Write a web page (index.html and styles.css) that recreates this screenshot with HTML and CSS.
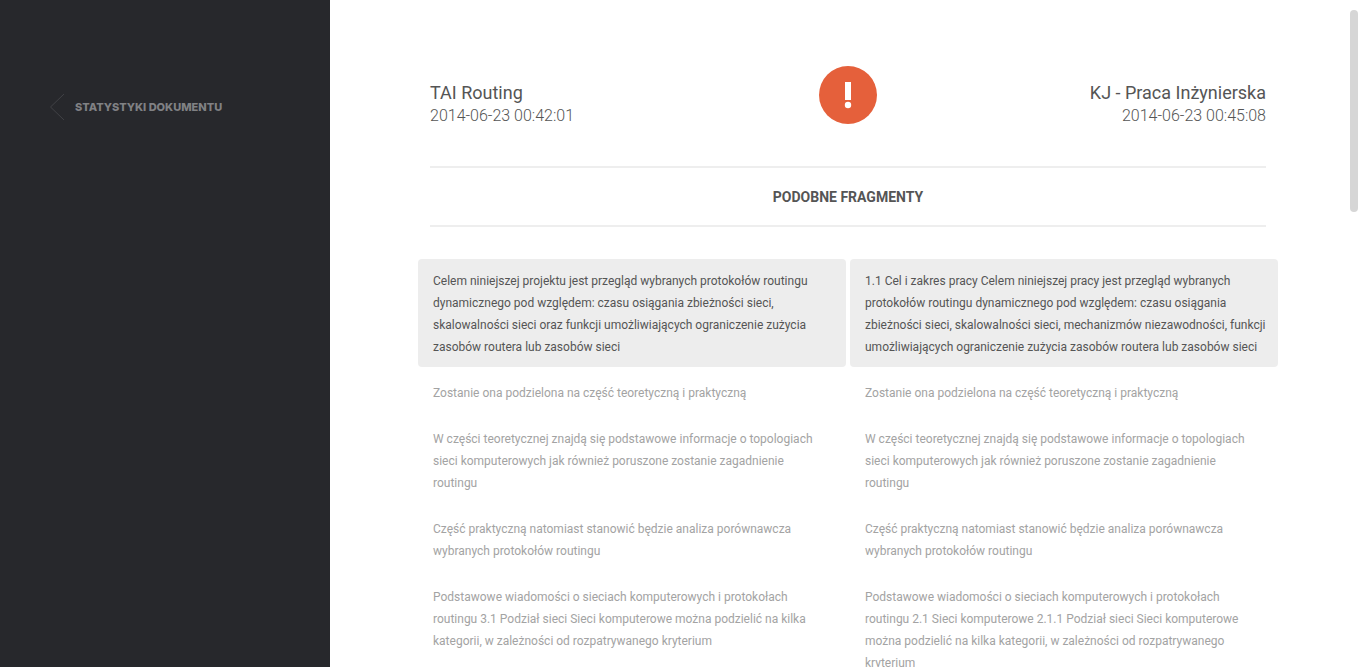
FILE: index.html
```html
<!DOCTYPE html>
<html lang="pl">
<head>
<meta charset="utf-8">
<meta name="viewport" content="width=device-width, initial-scale=1">
<title>Podobne fragmenty</title>
<link rel="stylesheet" href="styles.css">
</head>
<body>
<div class="layout">
  <aside class="sidebar">
    <a class="back" href="#">
      <svg class="back-icon" viewBox="0 0 15 28" aria-hidden="true"><path d="M14 1 .5 14 14 27"/></svg>
      <span>STATYSTYKI DOKUMENTU</span>
    </a>
  </aside>
  <main class="content">
    <header class="documents">
      <div class="document">
        <h2 class="document-name">TAI Routing</h2>
        <time class="document-date">2014-06-23 00:42:01</time>
      </div>
      <svg class="alert-icon" viewBox="0 0 58 58" role="img" aria-label="Uwaga"><circle cx="29" cy="29" r="29" fill="#e5603b"/><path d="M26 16h6v18h-6z" fill="#fff"/><circle cx="29" cy="39" r="3.2" fill="#fff"/></svg>
      <div class="document document-right">
        <h2 class="document-name">KJ - Praca Inżynierska</h2>
        <time class="document-date">2014-06-23 00:45:08</time>
      </div>
    </header>
    <h1 class="section-title">PODOBNE FRAGMENTY</h1>
    <section class="fragments">
      <p class="fragment active">Celem niniejszej projektu jest przegląd wybranych protokołów routingu<br>dynamicznego pod względem: czasu osiągania zbieżności sieci,<br>skalowalności sieci oraz funkcji umożliwiających ograniczenie zużycia<br>zasobów routera lub zasobów sieci</p>
      <p class="fragment active">1.1 Cel i zakres pracy Celem niniejszej pracy jest przegląd wybranych<br>protokołów routingu dynamicznego pod względem: czasu osiągania<br>zbieżności sieci, skalowalności sieci, mechanizmów niezawodności, funkcji<br>umożliwiających ograniczenie zużycia zasobów routera lub zasobów sieci</p>
      <p class="fragment">Zostanie ona podzielona na część teoretyczną i praktyczną</p>
      <p class="fragment">Zostanie ona podzielona na część teoretyczną i praktyczną</p>
      <p class="fragment">W części teoretycznej znajdą się podstawowe informacje o topologiach<br>sieci komputerowych jak również poruszone zostanie zagadnienie<br>routingu</p>
      <p class="fragment">W części teoretycznej znajdą się podstawowe informacje o topologiach<br>sieci komputerowych jak również poruszone zostanie zagadnienie<br>routingu</p>
      <p class="fragment">Część praktyczną natomiast stanowić będzie analiza porównawcza<br>wybranych protokołów routingu</p>
      <p class="fragment">Część praktyczną natomiast stanowić będzie analiza porównawcza<br>wybranych protokołów routingu</p>
      <p class="fragment">Podstawowe wiadomości o sieciach komputerowych i protokołach<br>routingu 3.1 Podział sieci Sieci komputerowe można podzielić na kilka<br>kategorii, w zależności od rozpatrywanego kryterium</p>
      <p class="fragment">Podstawowe wiadomości o sieciach komputerowych i protokołach<br>routingu 2.1 Sieci komputerowe 2.1.1 Podział sieci Sieci komputerowe<br>można podzielić na kilka kategorii, w zależności od rozpatrywanego<br>kryterium</p>
    </section>
    <div class="scroll-thumb"></div>
  </main>
</div>
</body>
</html>
```
FILE: styles.css
```css
* { box-sizing: border-box; }

body {
  margin: 0;
  background: #fff;
  color: #555;
  font: 12px/22px Roboto, "Liberation Sans", sans-serif;
}

.layout {
  display: grid;
  grid-template-columns: 330px minmax(0, 1fr);
  height: 100vh;
  overflow: hidden;
}

.sidebar {
  padding: 93px 50px;
  background: #27282c;
}

.back {
  display: flex;
  align-items: center;
  gap: 10px;
  color: #808184;
  font: 800 11px/22px Inter, Roboto, sans-serif;
  text-decoration: none;
}

.back-icon {
  width: 15px;
  height: 28px;
  fill: none;
  stroke: #414246;
}

.content {
  position: relative;
  padding: 66px 100px 0;
  overflow: hidden;
}

.documents {
  display: grid;
  grid-template-columns: 1fr auto 1fr;
  padding-bottom: 40px;
}

.document { padding-top: 16px; }
.document-right { text-align: right; }

.document-name {
  margin: 0;
  font-size: 18px;
  font-weight: 400;
  line-height: 22px;
}

.document-date {
  display: block;
  font-size: 16px;
  font-weight: 300;
  line-height: 24px;
}

.alert-icon {
  width: 58px;
  height: 58px;
}

.documents { height: 100px; }

.section-title {
  margin: 0 0 32px;
  padding: 18px 0 17px;
  border: solid #eee;
  border-width: 2px 0;
  font-size: 14px;
  font-weight: 700;
  line-height: 22px;
  text-align: center;
}

.fragments {
  display: grid;
  grid-template-columns: repeat(2, minmax(0, 1fr));
  gap: 4px;
  margin: 0 -12px;
}

.fragment {
  margin: 0;
  padding: 11px 15px 9px;
  border-radius: 4px;
  color: #a3a3a3;
  white-space: nowrap;
}

.fragment.active {
  background: #ededed;
  color: #555;
}

.scroll-thumb {
  position: absolute;
  top: 10px;
  right: 8px;
  width: 8px;
  height: 202px;
  border-radius: 4px;
  background: #d6d6d6;
}
```
